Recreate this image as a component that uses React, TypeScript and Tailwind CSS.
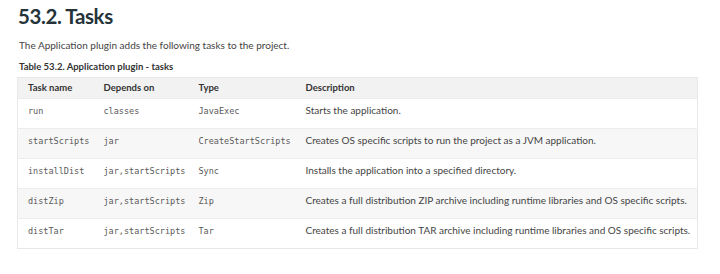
const rows = [
  { name: "run", deps: "classes", type: "JavaExec", desc: "Starts the application." },
  { name: "startScripts", deps: "jar", type: "CreateStartScripts", desc: "Creates OS specific scripts to run the project as a JVM application." },
  { name: "installDist", deps: "jar,startScripts", type: "Sync", desc: "Installs the application into a specified directory." },
  { name: "distZip", deps: "jar,startScripts", type: "Zip", desc: "Creates a full distribution ZIP archive including runtime libraries and OS specific scripts." },
  { name: "distTar", deps: "jar,startScripts", type: "Tar", desc: "Creates a full distribution TAR archive including runtime libraries and OS specific scripts." },
]

const mono = "font-['DejaVu_Sans_Mono',monospace] text-[8.5px] text-[#5a5a5a]"

export default function App() {
  return (
    <div className="w-[720px] h-[274px] bg-white pl-[17px] pt-[4px] font-['Lato',sans-serif]">
      {/* Heading */}
      <h1 className="ml-[1px] text-[20.5px] leading-[24px] font-bold text-[#24343a] tracking-[-0.4px]">53.2. Tasks</h1>
      <p className="ml-[2px] mt-[10px] text-[10px] leading-[14px] text-[#444]">
        The Application plugin adds the following tasks to the project.
      </p>
      <p className="ml-[2px] mt-[8px] text-[9.5px] leading-[14px] font-bold text-[#333]">
        Table 53.2. Application plugin - tasks
      </p>

      {/* Table */}
      <table className="mt-[3px] w-[681px] border border-[#e8e8e8] border-collapse table-fixed">
        <colgroup>
          <col className="w-[76px]" />
          <col className="w-[95px]" />
          <col className="w-[107px]" />
          <col />
        </colgroup>
        <thead>
          <tr className="h-[21px] bg-[#f2f2f2] text-left text-[9.5px] font-bold text-[#333]">
            <th className="pl-[10px] font-bold">Task name</th>
            <th className="pl-[10px] font-bold">Depends on</th>
            <th className="pl-[10px] font-bold">Type</th>
            <th className="pl-[10px] font-bold">Description</th>
          </tr>
        </thead>
        <tbody>
          {rows.map((r, i) => (
            <tr key={r.name} className={`h-[30px] align-top border-t border-[#ececec] ${i % 2 === 1 ? "bg-[#f7f7f7]" : "bg-white"}`}>
              <td className={`pl-[10px] pt-[6px] leading-[12px] ${mono}`}>{r.name}</td>
              <td className={`pl-[10px] pt-[6px] leading-[12px] ${mono}`}>{r.deps}</td>
              <td className={`pl-[10px] pt-[6px] leading-[12px] ${mono}`}>{r.type}</td>
              <td className="pl-[10px] pt-[5px] text-[10px] leading-[13px] text-[#444] whitespace-nowrap">{r.desc}</td>
            </tr>
          ))}
        </tbody>
      </table>
    </div>
  )
}
